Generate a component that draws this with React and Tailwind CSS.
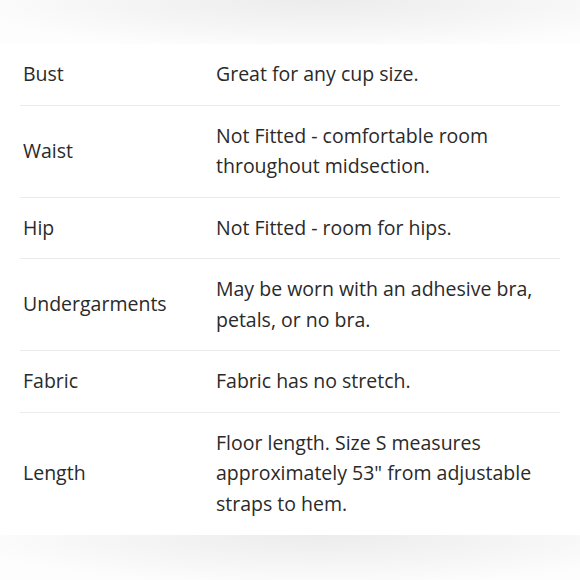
const rows = [
  { label: "Bust", value: ["Great for any cup size."] },
  { label: "Waist", value: ["Not Fitted - comfortable room", "throughout midsection."] },
  { label: "Hip", value: ["Not Fitted - room for hips."] },
  { label: "Undergarments", value: ["May be worn with an adhesive bra,", "petals, or no bra."] },
  { label: "Fabric", value: ["Fabric has no stretch."] },
  {
    label: "Length",
    value: ["Floor length. Size S measures", "approximately 53\" from adjustable", "straps to hem."],
  },
];

export default function App() {
  return (
    <div className="w-[580px] h-[580px] bg-white flex flex-col overflow-hidden font-['Open_Sans',sans-serif] text-[#2a2a2a]">
      <div className="h-[44px] shrink-0 bg-[radial-gradient(ellipse_at_55%_0%,#ececec_0%,#f5f5f5_45%,#fdfdfd_80%)]" />
      <div className="flex-1 px-5">
        {rows.map((r, i) => (
          <div
            key={r.label}
            className={`flex items-center py-[15px] text-[19.5px] leading-[30.5px] ${
              i < rows.length - 1 ? "border-b border-[#ececec]" : ""
            }`}
          >
            <div className="w-[196px] pl-[3px] shrink-0">{r.label}</div>
            <div>
              {r.value.map((l) => (
                <div key={l}>{l}</div>
              ))}
            </div>
          </div>
        ))}
      </div>
      <div className="h-[45px] shrink-0 bg-[radial-gradient(ellipse_at_55%_0%,#ececec_0%,#f5f5f5_45%,#fdfdfd_80%)]" />
    </div>
  );
}
